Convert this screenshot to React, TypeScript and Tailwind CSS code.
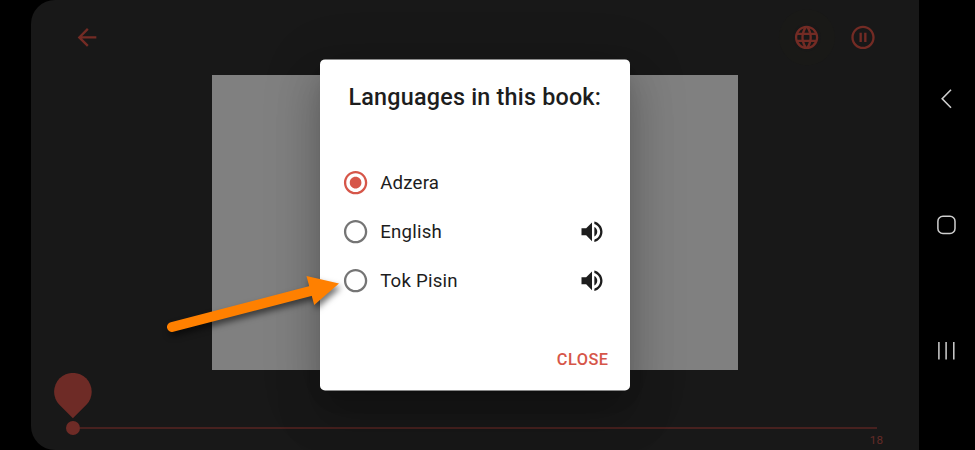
import {
  MdArrowBack,
  MdLanguage,
  MdPauseCircleOutline,
  MdRadioButtonChecked,
  MdRadioButtonUnchecked,
  MdVolumeUp,
} from "react-icons/md";

type Language = { name: string; audio: boolean; selected: boolean };

const languages: Language[] = [
  { name: "Adzera", audio: false, selected: true },
  { name: "English", audio: true, selected: false },
  { name: "Tok Pisin", audio: true, selected: false },
];

function PlayerHeader() {
  return (
    <header className="flex translate-y-[0.4px] items-center justify-between pt-[23px] pr-[42px] pl-[42px] text-[#732b24]">
      <MdArrowBack size={28} />
      <div className="flex gap-7">
        <div className="rounded-full shadow-[0_0_0_14px_#191917]">
          <MdLanguage size={28} className="-translate-x-[0.4px]" />
        </div>
        <MdPauseCircleOutline size={28} />
      </div>
    </header>
  );
}

function PageSlider() {
  return (
    <footer className="mt-[3px] pr-[42px] pl-[23px]">
      <svg className="block" width="38" height="46" viewBox="0 0 38 46" fill="#6e2b26">
        <path d="M5.4 31.8A18.8 18.8 0 1 1 32.4 31.8L18.9 45.2Z" />
      </svg>
      <div className="mt-[2px] flex items-center pl-3">
        <div className="size-[14px] rounded-full bg-[#6e2b26]" />
        <div className="h-[2px] grow bg-[#47211f]" />
      </div>
      <div className="-mr-[6px] text-right text-[11.7px] leading-[11px] text-[#652b27]">18</div>
    </footer>
  );
}

function LanguageDialog() {
  return (
    <section
      role="dialog"
      className="absolute top-[59px] left-[289px] h-[331px] w-[310px] translate-y-[0.4px] rounded-[5px] bg-white pt-[23px] text-[#1d1d1d] shadow-[0_13px_18px_-8px_rgba(0,0,0,0.2),0_28px_44px_4px_rgba(0,0,0,0.14),0_10px_54px_9px_rgba(0,0,0,0.12)]"
    >
      <h2 className="pl-[28.5px] text-[23.33px] leading-[30px] font-medium tracking-[0.22px] whitespace-nowrap">
        Languages in this book:
      </h2>
      <ul className="pt-[46px] pr-[24px] pl-[21.6px]">
        {languages.map((language) => (
          <li key={language.name} className="flex h-[49.2px] items-center text-[18.67px] tracking-[0.2px]">
            {language.selected ? (
              <MdRadioButtonChecked size={28} color="#d65649" className="-translate-x-[0.4px] -translate-y-[0.7px]" />
            ) : (
              <MdRadioButtonUnchecked size={28} color="#757575" className="-translate-x-[0.4px] -translate-y-[0.7px]" />
            )}
            <span className="grow pl-[10.6px]">{language.name}</span>
            {language.audio && <MdVolumeUp size={28} className="-translate-y-[0.6px]" />}
          </li>
        ))}
      </ul>
      <div className="flex justify-end pt-[40.5px] pr-[21.5px]">
        <button className="text-[16.33px] leading-[28px] font-medium tracking-[0.467px] text-[#d65649]">CLOSE</button>
      </div>
    </section>
  );
}

function SystemNavigation() {
  return (
    <nav className="flex w-14 flex-col items-center justify-between py-[86px]">
      <svg width="24" height="26" viewBox="0 0 24 26" fill="none" stroke="#cfcfcf" strokeWidth="1.6">
        <path d="M16 3.7L7.2 12.7L16 21.7" />
      </svg>
      <svg width="24" height="26" viewBox="0 0 24 26" fill="none" stroke="#cfcfcf" strokeWidth="1.5">
        <rect x="2.9" y="4.3" width="17.1" height="17.1" rx="5" />
      </svg>
      <svg width="24" height="26" viewBox="0 0 24 26" fill="none" stroke="#cfcfcf" strokeWidth="1.5">
        <path d="M3.9 4V21.5M11.1 4V21.5M18.8 4V21.5" />
      </svg>
    </nav>
  );
}

function Pointer() {
  return (
    <svg
      className="absolute top-[265px] left-[155px] drop-shadow-[2px_4px_3px_rgba(0,0,0,0.55)]"
      width="195"
      height="75"
      viewBox="0 0 195 75"
      fill="#ff8000"
    >
      <path d="M17 62L157 25.7" stroke="#ff8000" strokeWidth="10" strokeLinecap="round" />
      <path d="M151.5 11L184 18.5L159.2 40Z" />
    </svg>
  );
}

export default function App() {
  return (
    <div className="relative flex h-[450px] w-[975px] overflow-hidden bg-black font-[Roboto,sans-serif]">
      <main className="relative ml-[31px] h-full w-[888px] overflow-hidden rounded-l-[24px] bg-[#181818]">
        <PlayerHeader />
        <div className="mt-[24px] ml-[181px] h-[295px] w-[526px] bg-[#808080]" />
        <PageSlider />
        <LanguageDialog />
      </main>
      <SystemNavigation />
      <Pointer />
    </div>
  );
}
